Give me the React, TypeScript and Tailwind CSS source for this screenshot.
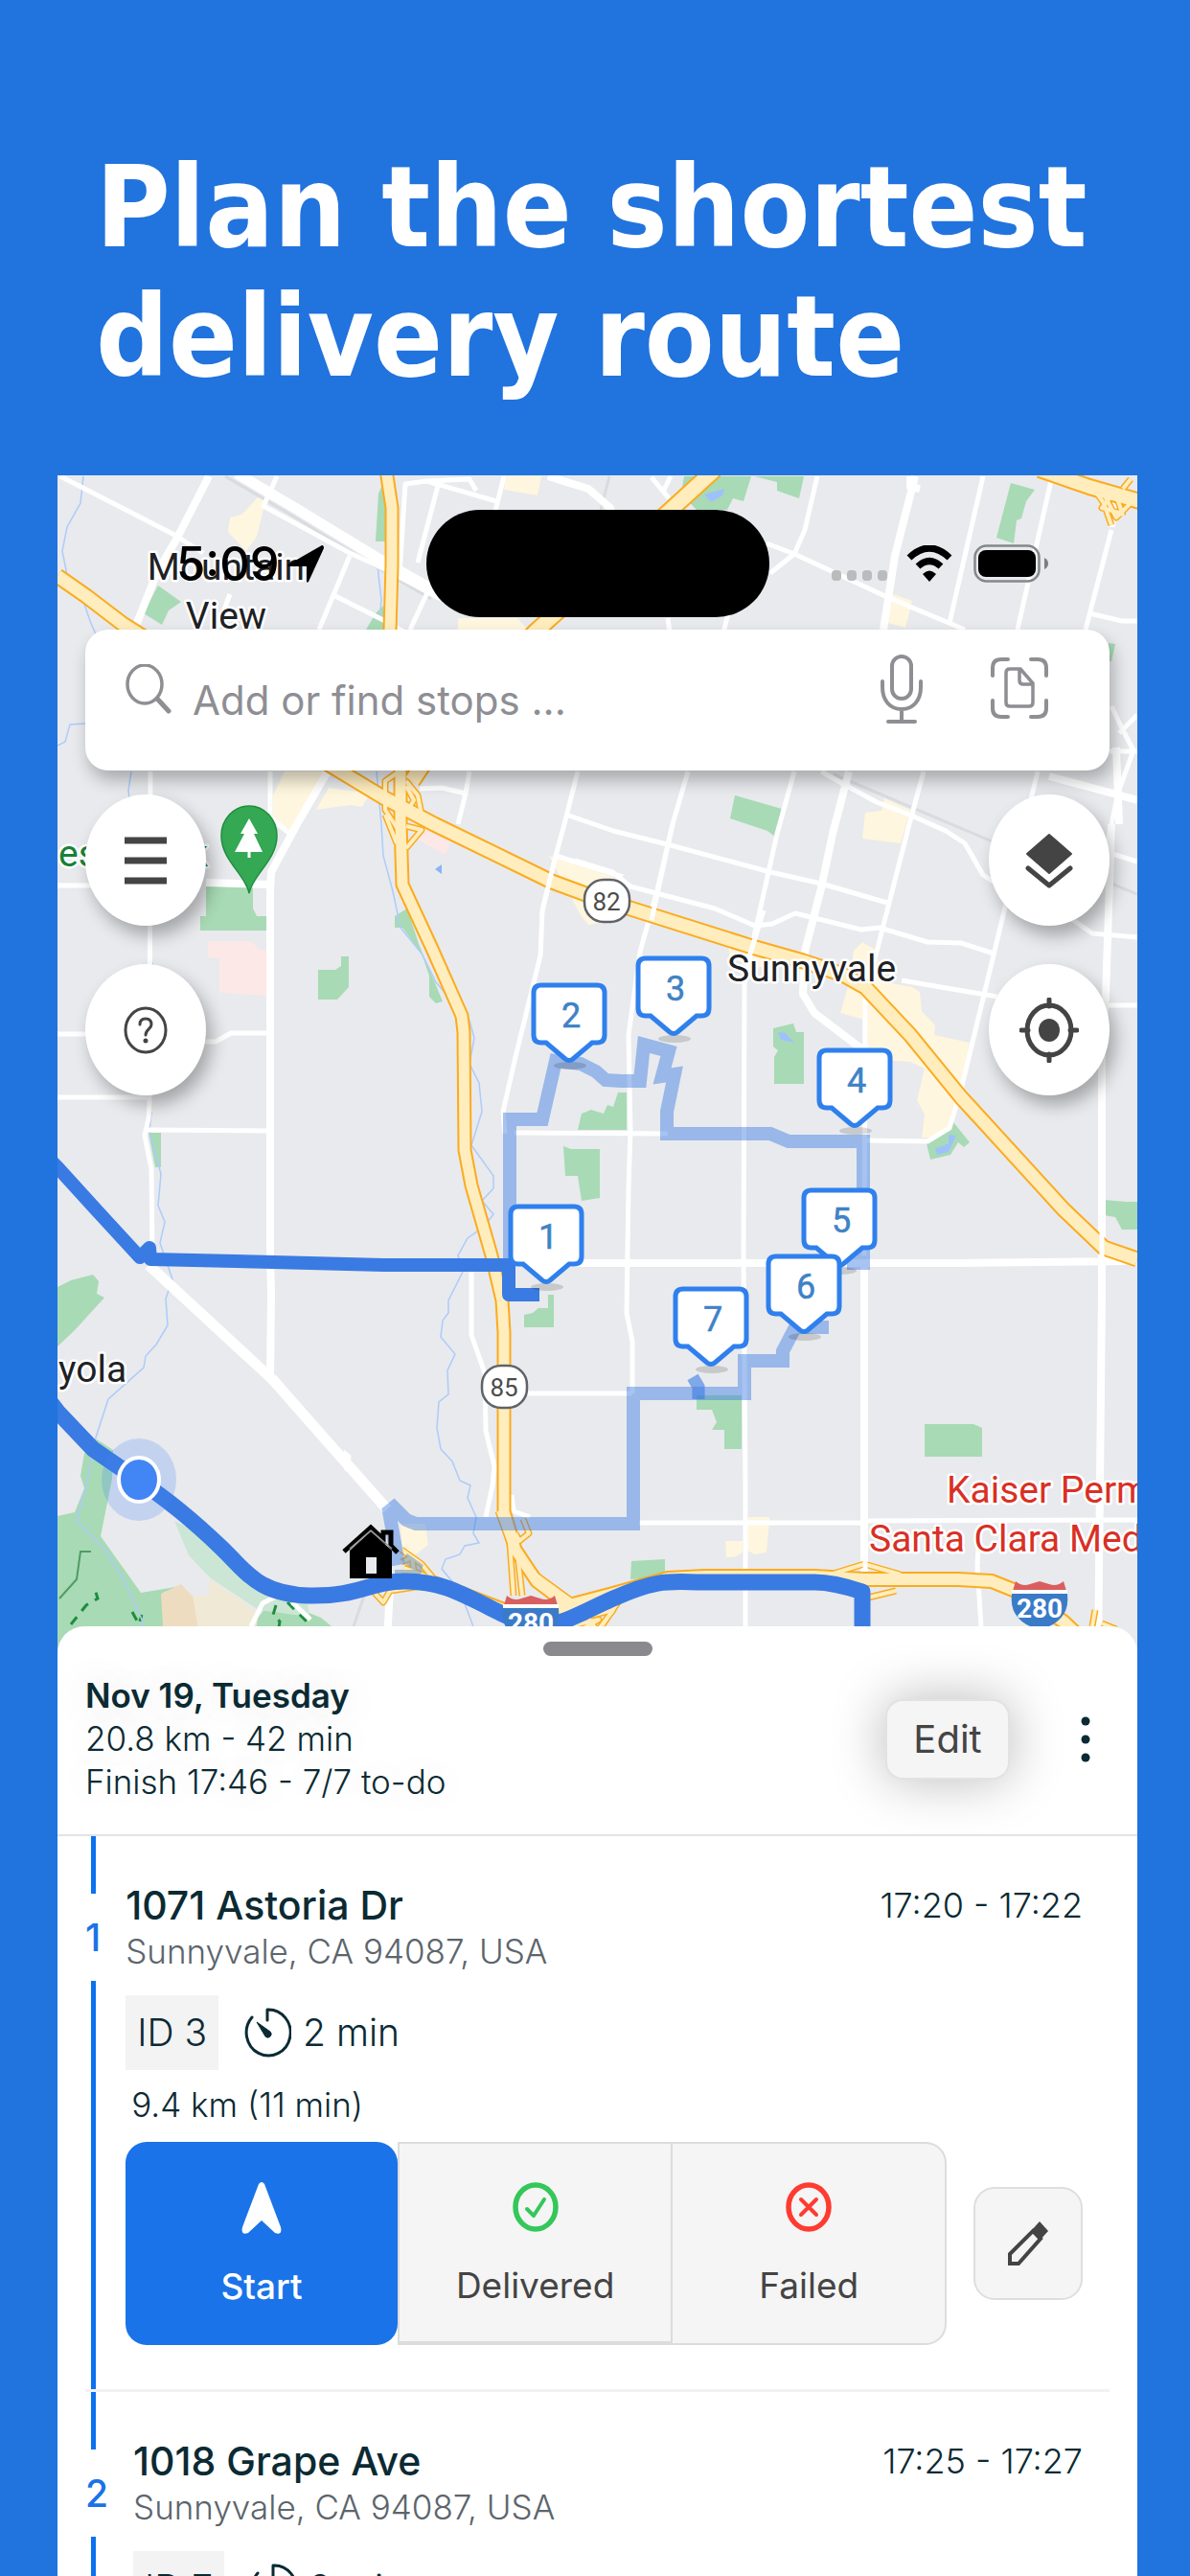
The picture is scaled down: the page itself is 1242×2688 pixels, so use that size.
import type { ReactNode } from "react";

interface Stop {
  index: number;
  street: string;
  city: string;
  time: string;
  id: string;
  duration: string;
  leg: string;
}

const stops: Stop[] = [
  {
    index: 1,
    street: "1071 Astoria Dr",
    city: "Sunnyvale, CA 94087, USA",
    time: "17:20 - 17:22",
    id: "ID 3",
    duration: "2 min",
    leg: "9.4 km (11 min)",
  },
  {
    index: 2,
    street: "1018 Grape Ave",
    city: "Sunnyvale, CA 94087, USA",
    time: "17:25 - 17:27",
    id: "ID 7",
    duration: "2 min",
    leg: "2.4 km (5 min)",
  },
];

// Top left corner of each numbered pin on the map
const pins = [
  { label: "1", x: 531, y: 1257 },
  { label: "2", x: 555, y: 1026 },
  { label: "3", x: 664, y: 998 },
  { label: "4", x: 853, y: 1094 },
  { label: "5", x: 837, y: 1240 },
  { label: "6", x: 800, y: 1309 },
  { label: "7", x: 703, y: 1343 },
];

const streets = [
  "M63 497L182 558L212 577",
  "M289 497L275 528L365 577L400 593L460 625",
  "M365 580L333 657M350 622L400 647L423 660",
  "M417 600L423 505L445 502L518 523M526 497L514 545",
  "M445 502L490 500L497 512M457 507L436 587M450 610L428 657M240 620L225 660",
  "M853 497L840 553L829 578L804 598M800 567L829 578L926 623L1007 657",
  "M1026 497L991 650M1098 497L1062 657M1160 553L1133 657M1137 640L1171 648L1187 648",
  "M697 645L699 660M760 640L755 660",
  "M680 498L698 520M700 497L692 513",
  "M1160 737L1171 760L1183 783L1167 827L1156 880M1158 784L1187 784M1168 765L1187 746",
  "M718 805L702 860L685 933L668 993L656 1080L658 1180L656 1240L654 1370L660 1400L660 1454",
  "M829 805L811 870L788 973L777 1027L776 1310L778 1550L778 1730",
  "M964 805L949 860L915 993L903 1037L902 1310",
  "M1083 805L1049 947L1003 1137L991 1177L968 1191L901 1190",
  "M857 805L880 818L915 837L949 850L987 867L1007 880L1026 913L1060 935",
  "M1100 955L1120 960L1140 974L1187 978M1158 890L1187 899",
  "M591 850L640 867L700 882L804 910L857 922L926 942",
  "M600 898L639 910L658 925L746 948L788 966L806 964L830 953L899 970L918 968L968 983L1003 984L1037 995",
  "M941 1023L1041 1040M1156 1049L1187 1049",
  "M157 805L156 1150L155 1167L151 1185L158 1220L159 1310",
  "M60 924L156 924M60 1079L150 1079M200 1087L225 1087L241 1078L282 1078M60 1145L156 1145M153 1179L282 1180",
  "M282 805L282 853L305 872",
  "M490 805L486 828L461 822L438 823M486 828L478 860",
  "M603 805L589 860L580 893L566 950L564 997L538 1103L525 1160L527 1183",
  "M580 893L650 915M537 1182L697 1183",
  "M551 1454L660 1454M667 1589L900 1589L902 1587L1187 1586",
  "M492 1327L492 1393L506 1433L507 1493L516 1530L514 1550L507 1583",
  "M534 1560L536 1577L553 1583M1020 1633L1022 1597M1020 1633L1026 1730",
  "M262 1697L274 1673L290 1665M305 1672L324 1690",
  "M358 1515L364 1520L362 1535",
];

const avenues = [
  "M218 497L184 563L164 597L141 655",
  "M955 497L934 580L922 657M950 497L950 508L960 510",
  "M572 497L614 510L637 530L640 545",
  "M886 805L869 870L857 927L840 993L838 1037L850 1057L896 1092L905 1096",
  "M342 805L310 860L283 910L282 930L282 1310L283 1350L282 1440M215 921L282 923",
  "M1160 860L1154 1040L1150 1093L1150 1350L1148 1550L1146 1730",
  "M902 1320L902 1640M580 1318L776 1318L1000 1318L1175 1316",
  "M407 1657L403 1730M1160 550L1162 520",
  "M1095 810L1187 835M1165 780L1168 860",
];

const highways = [
  { d: "M60 601L90 622L128 651L155 668", width: 17 },
  { d: "M746 490L700 532L560 658L480 740L430 815", width: 19 },
  { d: "M330 790L352 803L400 832L453 860L576 920L614 934L658 948L785 988L838 1003L880 1017L903 1030L950 1080L1003 1145L1110 1262L1152 1302L1187 1314", width: 17 },
  { d: "M403 490L409 530L409 590L407 657L410 740L418 804L418 860L420 923L451 990L482 1060L484 1077L485 1200L492 1237L513 1310L524 1357L526 1390L526 1577L538 1617L560 1650L600 1680", width: 15 },
  { d: "M1085 490L1137 508L1200 526", width: 18 },
  { d: "M420 1640L461 1655L526 1680L583 1678L640 1663L697 1647L735 1645L850 1645L902 1648L1000 1648L1035 1650L1060 1660L1110 1692L1150 1730", width: 16 },
];

const ramps = [
  "M418 804L402 815L402 845L415 865M402 830L415 838M402 850L414 880",
  "M424 815L436 830L440 850L455 862M424 820L432 835L426 845L440 855M424 862L440 866L424 885",
  "M1140 508L1152 525L1160 548M1150 512L1165 540L1185 520M1158 520L1150 530L1168 535M1166 520L1172 538M1180 500L1172 510",
  "M520 1577L532 1610L536 1665M540 1620L545 1665M555 1640L610 1680M546 1585L552 1600L542 1608L538 1600",
  "M380 1650L400 1672L407 1660L440 1655M419 1617L440 1632L455 1650M419 1630L430 1625L432 1640",
  "M860 1645L902 1632L940 1643M902 1668L935 1660M1140 1697L1143 1680M1150 1694L1165 1700",
  "M628 1697L645 1672M580 1700L625 1690L590 1710M600 1690L640 1680L625 1700M622 1700L612 1685",
];

const creeks = [
  "M87 497L84 525L70 550L65 575L70 600L88 630L94 648L100 662",
  "M60 778L68 774L73 756L90 755M137 805L134 825L136 840",
  "M157 960L157 1000L160 1008M158 1160L156 1180L168 1225L165 1258L172 1275L167 1297L180 1335L173 1355L175 1383L163 1403L152 1415L150 1427L113 1460L100 1500L90 1550L80 1587L108 1615L130 1650L148 1690L152 1705",
  "M393 805L398 860L400 893L410 930L418 968L440 995L455 1025L490 1065L495 1083L490 1110L500 1130L503 1160L492 1195L515 1227L515 1240L503 1253L515 1267L505 1280L488 1292L478 1310L483 1327L468 1357L468 1370L462 1378L460 1395L475 1413L467 1430L468 1455L458 1463L456 1490L460 1512L472 1525L480 1545L491 1550L488 1563L497 1583L494 1600L500 1610L485 1613L480 1622L465 1627L461 1637L480 1660L495 1700",
  "M393 580L395 600L398 625L396 650",
];

const parks = [
  "M165 611L189 628L176 637L169 652L150 640Z",
  "M392 640L400 632V657L382 657ZM395 515L402 500V565L392 565Z",
  "M714 497L784 497L776 523L765 520L759 532L727 532L711 515ZM787 497L839 497L834 520L811 512L811 503Z",
  "M1055 504L1080 511L1071 523L1066 541L1061 543L1058 567L1040 561Z",
  "M767 830L816 844L809 873L801 867L762 854Z",
  "M1157 671L1164 672L1160 690L1157 690Z",
  "M215 925H264V948L268 956H278V971H209V956H215Z",
  "M332 1012H350L356 1008V998H364V1030L352 1043H332Z",
  "M412 956L425 948L437 985L462 1045L455 1047L448 1040V1018L440 995L420 968H412Z",
  "M155 1182H168V1218H162Z",
  "M607 1162L617 1158L630 1162L634 1153L640 1155L645 1140H654V1179H603Z",
  "M588 1196L596 1199H626V1250L607 1253L603 1227H590Z",
  "M547 1372L556 1370L562 1365H572V1351H578V1385H547Z",
  "M807 1073L828 1068L831 1077H839V1131H808V1103L812 1096L807 1092Z",
  "M967 1193L995 1171L1012 1192L1006 1197L1000 1192L992 1205L971 1210Z",
  "M1152 1252L1175 1254H1187V1283H1171L1164 1270L1152 1268Z",
  "M965 1486H1016L1025 1490V1520H965Z",
  "M727 1456H774V1512H756V1492H743L748 1484L743 1471H727Z",
  "M659 1629L694 1627V1645L658 1648Z",
  "M60 1343L74 1336L97 1330L103 1337L101 1350L109 1354L78 1388L60 1405Z",
  "M101 1502L118 1513L117 1543L105 1603L147 1662L189 1655L170 1662L172 1730H60V1582L78 1578L88 1553L84 1540L88 1517Z",
  "M262 1697L285 1668L335 1688L346 1697V1730H262Z",
];

const districts = [
  "M270 518L277 523L268 560L257 575L238 555L240 540L252 537Z",
  "M528 497H565L561 517L526 511Z",
  "M478 645H540L552 658H478Z",
  "M297 805H338L318 845L302 872L285 855L285 830Z",
  "M343 822L386 828L378 842L365 840L330 845Z",
  "M932 620L952 627L945 655L927 650Z",
  "M903 848L920 846L923 833L950 845L940 880L900 875Z",
  "M573 893L640 915V960L614 965L606 955Z",
  "M760 985L830 1000L790 1010L762 1000Z",
  "M891 992L900 983L912 990L925 1025L952 1030L960 1035L962 1055L976 1070L975 1080L1012 1088L1003 1137L988 1187H962L965 1163L957 1148L965 1115L950 1108L905 1105V1065L877 1057L885 1030Z",
  "M781 1583H803V1587L800 1620L788 1622L778 1617ZM757 1608H775V1620L766 1625H758Z",
  "M418 1590H444L447 1612L430 1625L420 1618Z",
];

const routeAhead =
  "M532 1315V1168H566L580 1107L606 1110L622 1118L632 1127L648 1128H668L672 1090L698 1097L691 1123L704 1121L696 1160V1183H804L823 1191H901V1318H884M865 1385H830L817 1410V1420H777V1454H661V1590H434L424 1586L411 1573L406 1577L416 1633";

function Shield({ x, y }: { x: number; y: number }) {
  return (
    <g>
      <path d={`M${x + 2} ${y + 10}L${x + 5} ${y}Q${x + 12} ${y + 6} ${x + 20} ${y + 3}L${x + 30} ${y}L${x + 40} ${y + 3}Q${x + 48} ${y + 6} ${x + 55} ${y}L${x + 58} ${y + 10}Z`} fill="#d95f5f" />
      <path d={`M${x + 1} ${y + 9}H${x + 59}V${y + 13}H${x + 1}Z`} fill="#fff" />
      <path d={`M${x + 1} ${y + 13}H${x + 59}Q${x + 62} ${y + 38} ${x + 38} ${y + 48}H${x + 22}Q${x - 2} ${y + 38} ${x + 1} ${y + 13}Z`} fill="#3a7bc8" />
      <text x={x + 30} y={y + 38} textAnchor="middle" fontSize="28" fontWeight="700" fill="#fff">
        280
      </text>
    </g>
  );
}

function RouteBadge({ x, y, label }: { x: number; y: number; label: string }) {
  return (
    <g>
      <rect x={x} y={y} width="47" height="44" rx="20" fill="#fff" stroke="#5f6368" strokeWidth="2.5" />
      <text x={x + 23} y={y + 32} textAnchor="middle" fontSize="26" fill="#4b4b4b">
        {label}
      </text>
    </g>
  );
}

function RouteMap() {
  return (
    <svg
      className="absolute inset-0 h-full w-full font-[Roboto,sans-serif]"
      viewBox="60 496 1127 1231"
      preserveAspectRatio="xMidYMin slice"
      role="img"
      aria-label="Route map"
    >
      <rect x="60" y="496" width="1127" height="1231" fill="#e8eaed" />

      {/* Land use */}
      <g fill="#fef6de">{districts.map((d) => <path key={d} d={d} />)}</g>
      <g fill="#a8dab5">{parks.map((d) => <path key={d} d={d} />)}</g>
      <path d="M182 1587L250 1620L254 1640L321 1673L323 1687L270 1680L220 1647L197 1623Z" fill="#cbe6d4" />
      <path d="M168 1663L189 1653L205 1670L212 1730H172Z" fill="#eedcc1" />
      <path d="M201 1665H218V1647L270 1683L262 1730H212Z" fill="#f0e9d6" />
      <path d="M217 982H262L270 990L278 992V1039L229 1036V1000H217Z" fill="#fce8e6" />
      <path d="M432 862L445 858L472 874L465 892L430 873Z" fill="#fce8e6" />
      <path d="M735 516L756 510L754 517L742 524ZM812 1077L820 1078L829 1088L815 1085Z" fill="#9fc1fb" />
      <path d="M976 1199L990 1193V1184L998 1185L990 1202L978 1205Z" fill="#9fc1fb" />
      <path d="M454 907L461 902V912Z" fill="#8ab4f8" />
      <g fill="none" stroke="#1e8e3e" strokeWidth="3" strokeDasharray="10 8">
        <path d="M74 1695L90 1675L102 1668L98 1655M138 1682L145 1695L148 1685M288 1675L285 1685L292 1692L290 1705M300 1672L325 1697" />
      </g>
      <path d="M95 1619H84L80 1648L62 1668" fill="none" stroke="#4f9d63" strokeWidth="2" />
      <g fill="none" stroke="#aecbfa" strokeWidth="1.5">
        {creeks.map((d) => <path key={d} d={d} />)}
      </g>
      <path d="M235 497L300 535L400 596L450 625M870 808L1040 880M1155 920L1187 933M636 497L625 540M380 1665L368 1700" fill="none" stroke="#d9dbdf" strokeWidth="3" />

      {/* Roads */}
      <g fill="none" stroke="#fff" strokeLinejoin="round">
        <g strokeWidth="5">{streets.map((d) => <path key={d} d={d} />)}</g>
        <g strokeWidth="8">{avenues.map((d) => <path key={d} d={d} />)}</g>
        <path d="M247 494L308 530L400 586L460 620M155 1320L285 1440L404 1575" strokeWidth="11" />
      </g>
      <g fill="none" strokeLinejoin="round">
        <g stroke="#fbab1f" strokeWidth="7">{ramps.map((d) => <path key={d} d={d} />)}</g>
        {highways.map((h) => <path key={h.d} d={h.d} stroke="#fbab1f" strokeWidth={h.width} />)}
        <g stroke="#ffedbd" strokeWidth="4">{ramps.map((d) => <path key={d} d={d} />)}</g>
        {highways.map((h) => <path key={h.d} d={h.d} stroke="#ffedbd" strokeWidth={h.width - 4} />)}
      </g>
      <path d="M580 893L566 950M702 860L680 960M797 950L780 1005M903 1637V1600M1150 1280V1340" stroke="#fff" strokeWidth="5" fill="none" />

      <RouteBadge x={610} y={918} label="82" />
      <RouteBadge x={503} y={1425} label="85" />

      {/* Planned route */}
      <path d={routeAhead} fill="none" stroke="#3a7ae3" strokeOpacity="0.45" strokeWidth="14" />
      <path d="M723 1437L729 1447V1460" fill="none" stroke="#3a7ae3" strokeOpacity="0.6" strokeWidth="13" />
      <path d="M422 1625L436 1635L434 1643H412" fill="none" stroke="#7c9cb8" strokeOpacity="0.6" strokeWidth="10" />
      <g fill="none" stroke="#3a7ae3" strokeLinejoin="round">
        <path d="M50 1208L60 1218L100 1262L146 1312L156 1302L157 1314L285 1317L400 1320H531V1351H563" strokeWidth="14" />
        <path d="M50 1460L60 1473L97 1512L145 1545C180 1568 205 1590 231 1615S270 1664 323 1665S385 1650 423 1650S480 1662 526 1685S590 1690 640 1668S700 1651 735 1651H850Q870 1651 900 1661V1730" strokeWidth="17" />
      </g>
      <Shield x={1055} y={1650} />
      <Shield x={524} y={1665} />

      {/* Place names */}
      <g fontSize="39" fill="#202124" stroke="#fff" strokeWidth="5" strokeLinejoin="round" paintOrder="stroke">
        <text x="236" y="605" textAnchor="middle">Mountain</text>
        <text x="236" y="656" textAnchor="middle">View</text>
        <text x="759" y="1024">Sunnyvale</text>
        <text x="61" y="1442">yola</text>
        <text x="61" y="904" fill="#188038">es</text>
        <text x="217" y="904" fill="#188038" textAnchor="end">k</text>
        <text x="988" y="1568" fill="#d93025">Kaiser Perm</text>
        <text x="907" y="1619" fill="#d93025">Santa Clara Med</text>
      </g>

      {/* Park pin */}
      <path d="M260 932C256 912 231 898 231 872A29 31 0 0 1 289 872C289 898 264 912 260 932Z" fill="#34a853" stroke="#1e8e3e" strokeWidth="1.5" />
      <path d="M260 854L269 870H265L274 889H261.500V895H258.500V889H245L255 870H251Z" fill="#fff" />

      {/* Current position */}
      <ellipse cx="145" cy="1544" rx="39" ry="43" fill="#4285f4" fillOpacity="0.22" />
      <ellipse cx="145" cy="1544" rx="21" ry="23" fill="#4285f4" stroke="#fff" strokeWidth="4" />

      {/* Depot */}
      <path d="M359 1619L387 1594L400 1606V1599H408V1613L415 1620" fill="none" stroke="#000" strokeWidth="5" />
      <path d="M365 1618L387 1598L409 1618V1647H365Z" fill="#000" />
      <path d="M365 1616L387 1597L409 1616" fill="none" stroke="#9a9a9a" strokeWidth="1.500" />
      <rect x="382" y="1625" width="11" height="17" fill="#e8eaed" />

      {pins.map((pin) => (
        <g key={pin.label} transform={`translate(${pin.x} ${pin.y})`}>
          <ellipse cx="40" cy="86" rx="17" ry="4" fill="#000" fillOpacity="0.14" />
          <path
            d="M10 2H68Q76 2 76 10V54Q76 62 68 62H63L43 79Q39 82 35 79L15 62H10Q2 62 2 54V10Q2 2 10 2Z"
            fill="#fff"
            stroke="#2f80ed"
            strokeWidth="5"
          />
          <text x="41" y="46" textAnchor="middle" fontSize="36" fill="#3f82c6" stroke="#3f82c6" strokeWidth="0.500">
            {pin.label}
          </text>
        </g>
      ))}
    </svg>
  );
}

function StatusBar() {
  return (
    <div className="grid grid-cols-[1fr_358px_1fr] pt-9">
      <div className="flex items-center gap-2 pl-[124px]">
        <span className="text-[49px] leading-none font-medium text-black">5:09</span>
        <svg className="h-[39px] w-[38px]" viewBox="0 0 38 39">
          <path d="M1 20L36 0Q38 0 38 3L22 38Q20 40 20 37V22L2 22Q-1 22 1 20Z" fill="#000" />
        </svg>
      </div>
      <div className="h-[112px] rounded-full bg-black" />
      <div className="flex items-center pl-[65px]">
        <div className="mt-6 flex gap-[6px]">
          <span className="h-[11px] w-[10px] rounded bg-[#babbbd]" />
          <span className="h-[11px] w-[10px] rounded bg-[#babbbd]" />
          <span className="h-[11px] w-[10px] rounded bg-[#babbbd]" />
          <span className="h-[11px] w-[10px] rounded bg-[#babbbd]" />
        </div>
        <svg className="ml-5 h-[38px] w-[48px]" viewBox="0 0 48 38">
          <path d="M3 13Q24 -7 45 13M12 22Q24 11 36 22" fill="none" stroke="#000" strokeWidth="7" />
          <path d="M24 38L17 30Q24 23 31 30Z" fill="#000" />
        </svg>
        <svg className="ml-[22px] h-10 w-[79px]" viewBox="0 0 79 40">
          <rect x="1.500" y="1.500" width="67" height="37" rx="12" fill="none" stroke="#85868a" strokeWidth="2.500" />
          <rect x="5" y="6" width="60" height="28" rx="8" fill="#000" />
          <path d="M74 14Q78 16 78 20T74 26Z" fill="#7d7e82" />
        </svg>
      </div>
    </div>
  );
}

function SearchBar() {
  return (
    <div className="mx-[29px] mt-[13px] flex h-[147px] rounded-[24px] bg-white px-[42px] shadow-[4px_10px_18px_rgba(0,0,0,0.28)]">
      <svg className="mt-9 h-[52px] w-[48px] shrink-0" viewBox="0 0 48 52" fill="none" stroke="#8e8e93">
        <ellipse cx="20" cy="21" rx="18" ry="20" strokeWidth="3.500" />
        <path d="M33 36L45 49" strokeWidth="5" strokeLinecap="round" />
      </svg>
      <input
        type="text"
        aria-label="Add or find stops"
        placeholder="Add or find stops ..."
        className="ml-[22px] min-w-0 flex-1 bg-transparent text-[42px] text-[#8e8e93] outline-none placeholder:text-[#8e8e93]"
      />
      <button type="button" aria-label="Voice search" className="mt-[25px] h-[74px] w-[46px] shrink-0">
        <svg viewBox="0 0 46 74" fill="none" stroke="#8e8e93" strokeWidth="4" strokeLinecap="round">
          <rect x="13" y="3" width="20" height="44" rx="10" />
          <path d="M3 29V35C3 49 11 58 23 58S43 49 43 35V29M23 58V70M9 71H37" />
        </svg>
      </button>
      <button type="button" aria-label="Scan document" className="mt-7 mr-[21px] ml-[69px] h-[66px] w-[62px] shrink-0">
        <svg viewBox="0 0 62 66" fill="none" stroke="#8e8e93" strokeWidth="4" strokeLinecap="round">
          <path d="M3 20V12Q3 3 12 3H19M43 3H50Q59 3 59 12V20M59 46V54Q59 63 50 63H43M19 63H12Q3 63 3 54V46" />
          <path d="M21 13H32L45 28V48Q45 52 41 52H21Q17 52 17 48V17Q17 13 21 13ZM31 14V25Q31 29 35 29H44" strokeWidth="3.500" />
        </svg>
      </button>
    </div>
  );
}

function MapButton({ label, children }: { label: string; children: ReactNode }) {
  return (
    <button
      type="button"
      aria-label={label}
      className="flex h-[137px] w-[126px] items-center justify-center rounded-[50%] bg-white shadow-[6px_10px_18px_rgba(0,0,0,0.3)]"
    >
      {children}
    </button>
  );
}

function MapControls() {
  return (
    <div className="mx-[29px] mt-[25px] flex justify-between">
      <div className="flex flex-col gap-10">
        <MapButton label="Menu">
          <svg className="h-[50px] w-[46px]" viewBox="0 0 46 50">
            <path d="M1 4H45M1 25H45M1 46H45" stroke="#444" strokeWidth="7" />
          </svg>
        </MapButton>
        <MapButton label="Help">
          <svg className="h-[50px] w-[46px]" viewBox="0 0 46 50" fill="none" stroke="#444" strokeWidth="3">
            <ellipse cx="23" cy="25" rx="21" ry="23" />
            <path d="M17 19Q17 13 23 13T29 19C29 24 23 24 23 30" strokeLinecap="round" />
            <circle cx="23" cy="36" r="1.500" fill="#444" strokeWidth="2" />
          </svg>
        </MapButton>
      </div>
      <div className="flex flex-col gap-10">
        <MapButton label="Map layers">
          <svg className="h-[58px] w-[50px]" viewBox="0 0 50 58">
            <path d="M25 2L48 22L25 42L2 22Z" fill="#444" stroke="#444" strokeWidth="2" strokeLinejoin="round" />
            <path d="M3 37L25 55L47 37" fill="none" stroke="#444" strokeWidth="5" strokeLinecap="round" strokeLinejoin="round" />
          </svg>
        </MapButton>
        <MapButton label="My location">
          <svg className="h-[68px] w-[62px]" viewBox="0 0 62 68" stroke="#444" fill="none">
            <ellipse cx="31" cy="34" rx="23" ry="26" strokeWidth="5" />
            <ellipse cx="31" cy="34" rx="11" ry="12" fill="#444" stroke="none" />
            <path d="M31 2V9M31 59V66M2 34H9M53 34H60" strokeWidth="5" strokeLinecap="round" />
          </svg>
        </MapButton>
      </div>
    </div>
  );
}

function SheetHeader() {
  return (
    <header className="border-b-2 border-[#e2e3e4] pb-8">
      <div className="flex justify-center pt-4">
        <span className="h-[15px] w-[114px] rounded-full bg-[#8a8a8e]" />
      </div>
      <div className="mt-[19px] flex items-center pr-[42px] pl-[29px] text-[#0b2a33]">
        <div className="flex-1 text-[35px] leading-[45px] font-light [text-shadow:0_0_40px_rgba(0,0,0,0.15)]">
          <h2 className="font-semibold">Nov 19, Tuesday</h2>
          <p>20.8 km - 42 min</p>
          <p>Finish 17:46 - 7/7 to-do</p>
        </div>
        <button
          type="button"
          className="h-[84px] w-[130px] rounded-[18px] border-2 border-[#e2e2e2] bg-[#f5f5f5] text-[40px] text-[#444] shadow-[0_0_56px_rgba(0,0,0,0.28)]"
        >
          Edit
        </button>
        <button type="button" aria-label="More options" className="ml-[67px] flex h-20 w-6 items-center justify-center">
          <svg className="h-12 w-[10px]" viewBox="0 0 10 48" fill="#0b2a33">
            <circle cx="5" cy="5" r="4.500" />
            <circle cx="5" cy="24" r="4.500" />
            <circle cx="5" cy="43" r="4.500" />
          </svg>
        </button>
      </div>
    </header>
  );
}

function TimerIcon() {
  return (
    <svg className="h-[52px] w-[50px]" viewBox="0 0 50 52" fill="none" stroke="#0b2a33" strokeWidth="3">
      <path d="M9 10A23 24 0 1 0 25 2V13" strokeLinecap="round" strokeLinejoin="round" />
      <path d="M14 15L28 25A3.500 3.500 0 0 1 23 30Z" fill="#0b2a33" strokeWidth="1" />
    </svg>
  );
}

function StopActions() {
  return (
    <div className="mt-4 flex items-center text-[37px] text-[#444]">
      <div className="flex h-[212px] max-w-[858px] flex-1">
        <button type="button" className="flex flex-1 flex-col items-center rounded-[22px] bg-[#1a73e8] pt-[41px] font-medium text-white">
          <svg className="h-[56px] w-[42px]" viewBox="0 0 42 56">
            <path d="M18 3Q21 -1 24 3L41 48Q43 57 35 54L21 41L7 54Q-1 57 1 48Z" fill="#fff" />
          </svg>
          <span className="mt-[31px] leading-[45px]">Start</span>
        </button>
        <button type="button" className="flex flex-1 flex-col items-center border-2 border-b-4 border-[#dcdcdc] bg-[#f5f5f5] pt-10">
          <svg className="h-[52px] w-[48px]" viewBox="0 0 48 52" fill="none" stroke="#34c759">
            <ellipse cx="24" cy="26" rx="21" ry="23" strokeWidth="5.500" />
            <path d="M15 28L22 35L33 18" strokeWidth="4" strokeLinecap="round" strokeLinejoin="round" />
          </svg>
          <span className="mt-[33px] leading-[45px]">Delivered</span>
        </button>
        <button type="button" className="flex flex-1 flex-col items-center rounded-r-[22px] border-2 border-l-0 border-[#dcdcdc] bg-[#f5f5f5] pt-10">
          <svg className="h-[52px] w-[48px]" viewBox="0 0 48 52" fill="none" stroke="#ff3b30">
            <ellipse cx="24" cy="26" rx="21" ry="23" strokeWidth="5.500" />
            <path d="M16 18L32 34M32 18L16 34" strokeWidth="4" strokeLinecap="round" />
          </svg>
          <span className="mt-[33px] leading-[45px]">Failed</span>
        </button>
      </div>
      <button
        type="button"
        aria-label="Edit stop"
        className="ml-7 flex h-[118px] w-[114px] items-center justify-center rounded-[22px] border-2 border-[#dedede] bg-[#f5f5f5]"
      >
        <svg className="h-[46px] w-[42px]" viewBox="0 0 42 46">
          <path d="M2 34L26 10L34 18L11 44H2Z" fill="none" stroke="#444" strokeWidth="4" />
          <path d="M24 10L33 0L42 10L33 20Z" fill="#444" />
        </svg>
      </button>
    </div>
  );
}

function StopItem({ stop }: { stop: Stop }) {
  return (
    <li className="mx-[29px] flex border-b-[3px] border-[#f2f2f2]">
      <div className="flex flex-col">
        <span className="ml-[6px] h-[60px] w-[5px] bg-[#0b72f0]" />
        <span className="pt-[22px] pb-[21px] text-[39px] leading-[48px] font-medium text-[#1a73e8]">{stop.index}</span>
        <span className="ml-[6px] w-[5px] flex-1 bg-[#0b72f0]" />
      </div>
      <div className="ml-[26px] flex-1 pt-[47px] pr-7 pb-[46px] text-[#0b2a33]">
        <div className="flex items-center justify-between leading-[50px]">
          <h3 className="text-[41px] font-medium">{stop.street}</h3>
          <time className="text-[36px] font-light">{stop.time}</time>
        </div>
        <p className="text-[35px] leading-[46px] font-light text-[#5c656c]">{stop.city}</p>
        <div className="mt-[23px] flex items-center text-[39px] font-light">
          <span className="flex h-[78px] items-center bg-[#f3f3f3] px-3">{stop.id}</span>
          <span className="ml-[26px] flex items-center gap-3">
            <TimerIcon />
            {stop.duration}
          </span>
        </div>
        <p className="mt-[13px] ml-[6px] text-[35px] leading-[46px] font-light">{stop.leg}</p>
        <StopActions />
      </div>
    </li>
  );
}

export default function App() {
  return (
    <div className="flex h-screen flex-col overflow-hidden bg-[#2173de] pr-[55px] pl-[60px] font-[Inter,sans-serif]">
      <h1 className="shrink-0 pt-[149px] pl-10 font-['DejaVu_Sans_Condensed','DejaVu_Sans',sans-serif] text-[118px] leading-[135px] font-bold text-white">
        Plan the shortest
        <br />
        delivery route
      </h1>
      <main className="mt-[77px] flex-1 overflow-hidden bg-white">
        <section className="relative min-h-[1231px]">
          <RouteMap />
          <div className="relative">
            <StatusBar />
            <SearchBar />
            <MapControls />
          </div>
        </section>
        <section className="relative -mt-[30px] rounded-t-[28px] bg-white">
          <SheetHeader />
          <ol>
            {stops.map((stop) => (
              <StopItem key={stop.index} stop={stop} />
            ))}
          </ol>
        </section>
      </main>
    </div>
  );
}
